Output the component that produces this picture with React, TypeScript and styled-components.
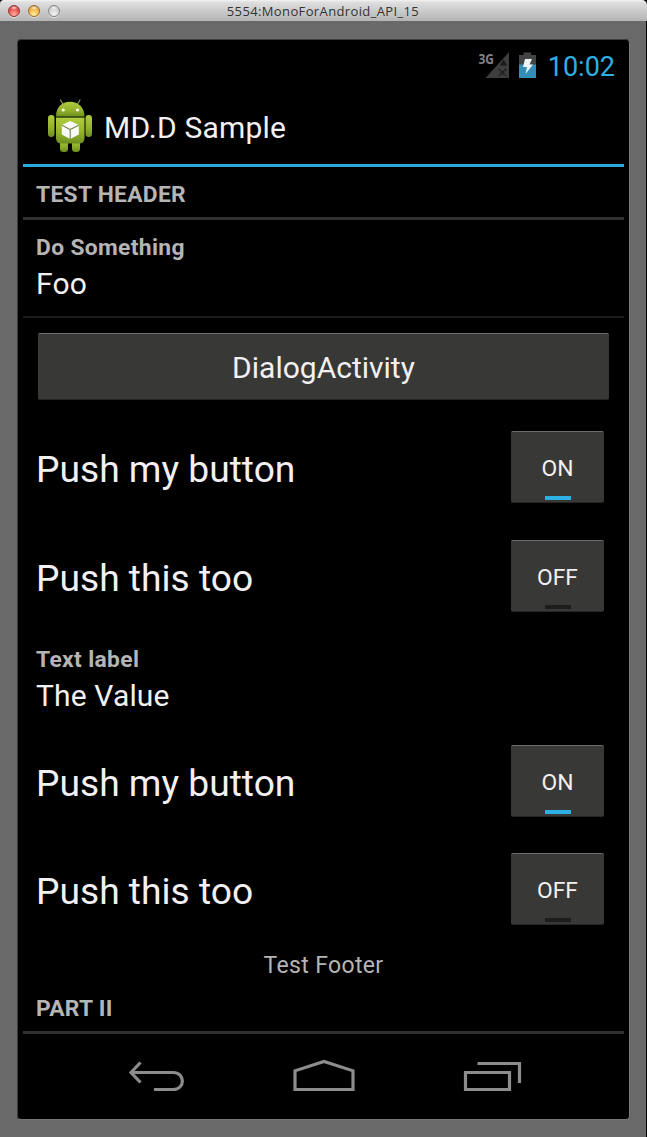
import React from "react";
import styled, { createGlobalStyle } from "styled-components";

const GlobalStyle = createGlobalStyle`
  * { box-sizing: border-box; }
  html, body { margin: 0; padding: 0; background: #000; }
  body { font-family: Roboto, "Liberation Sans", sans-serif; color: #f3f0f3; }
  button { font: inherit; color: inherit; padding: 0; margin: 0; border: 0; background: none; }
`;

const Window = styled.div`
  width: 647px;
  height: 1137px;
  display: flex;
  flex-direction: column;
  overflow: hidden;
  background: #000;
`;

const TitleBar = styled.header`
  height: 21px;
  flex: none;
  display: grid;
  grid-template-columns: 1fr auto 1fr;
  align-items: center;
  padding: 1px 9px 0 8px;
  border-radius: 4px 5px 0 0;
  background: linear-gradient(#f2f2f2, #dedede 12%, #b4b4b4);
`;

const Lights = styled.div`
  display: flex;
  gap: 8px;
`;

const Light = styled.span<{ $top: string; $mid: string; $glow: string; $edge: string }>`
  width: 12px;
  height: 12px;
  border-radius: 50%;
  border: 1px solid ${(p) => p.$edge};
  background:
    radial-gradient(ellipse 4px 2px at 50% 18%, rgba(255, 255, 255, 0.85), transparent),
    radial-gradient(circle at 50% 85%, ${(p) => p.$glow}, ${(p) => p.$mid} 60%, ${(p) => p.$top});
  box-shadow: 0 1px 0 rgba(255, 255, 255, 0.5);
`;

const WindowTitle = styled.h1`
  margin: 0;
  padding-top: 1px;
  font: 400 13px/19px "Open Sans", sans-serif;
  letter-spacing: 0.37px;
  color: #333;
  white-space: nowrap;
`;

const Bezel = styled.main`
  flex: 1;
  width: 646px;
  padding: 18px 16px 18px 17px;
  background: #696969;
`;

const Screen = styled.div`
  height: 1081px;
  display: flex;
  flex-direction: column;
  padding: 0 5px;
  border: 1px solid #3c3c3c;
  border-right-color: #777;
  border-bottom-color: #777;
  border-radius: 4px;
  background: #000;
`;

const StatusBar = styled.div`
  height: 47px;
  flex: none;
  display: flex;
  justify-content: flex-end;
  padding: 6px 9px 0 0;
`;

const Clock = styled.time`
  font-size: 27px;
  line-height: 42px;
  color: #2fb0e3;
  margin-left: 10px;
`;

const ActionBar = styled.div`
  height: 80px;
  flex: none;
  display: flex;
  align-items: center;
  padding: 4px 0 0 24px;
  border-bottom: 3px solid #2ba9dc;
`;

const RobotIcon = styled.svg`
  flex: none;
  margin-top: -3px;
`;

const AppTitle = styled.h2`
  margin: 0 0 0 11px;
  font-size: 30px;
  line-height: 36px;
  font-weight: 400;
  letter-spacing: 0.2px;
`;

const SectionHeader = styled.h3<{ $height: number }>`
  margin: 0;
  height: ${(p) => p.$height}px;
  flex: none;
  padding: 0 13px 8px;
  display: flex;
  align-items: flex-end;
  font-size: 22.8px;
  line-height: 29px;
  font-weight: 700;
  letter-spacing: 0.3px;
  color: #b5b5b5;
  border-bottom: 3px solid #303030;
`;

const Entry = styled.div<{ $height: number; $divided?: boolean }>`
  height: ${(p) => p.$height}px;
  flex: none;
  padding: 13px 13px 0;
  border-bottom: ${(p) => (p.$divided ? "2px solid #1c1c1c" : "0")};
`;

const EntryLabel = styled.div`
  font-size: 22.8px;
  line-height: 30px;
  font-weight: 700;
  letter-spacing: 0.35px;
  color: #b5b5b5;
`;

const EntryValue = styled.div`
  font-size: 30px;
  line-height: 42px;
  letter-spacing: 0.15px;
`;

const ButtonRow = styled.div`
  height: 113px;
  flex: none;
  padding: 15px 15px 0;
`;

const WideButton = styled.button`
  display: block;
  width: 571px;
  height: 67px;
  border-radius: 2px;
  border-top: 1px solid #6c6d6b;
  border-bottom: 1px solid #242524;
  background: #383936;
  font-size: 30px;
  line-height: 67px;
  text-align: center;
`;

const ToggleRow = styled.div<{ $height: number }>`
  height: ${(p) => p.$height}px;
  flex: none;
  display: flex;
  align-items: flex-start;
  justify-content: space-between;
  padding: 0 20px 0 13px;
`;

const ToggleLabel = styled.span`
  font-size: 37.2px;
  line-height: 76px;
`;

const ToggleButton = styled.button`
  width: 93px;
  height: 72px;
  display: flex;
  flex-direction: column;
  align-items: center;
  justify-content: space-between;
  padding-bottom: 2px;
  border-radius: 2px;
  border-top: 1px solid #6c6d6b;
  border-bottom: 1px solid #242524;
  background: #383936;
`;

const ToggleState = styled.span`
  padding-top: 22px;
  font-size: 22.8px;
  line-height: 29px;
`;

const Indicator = styled.span<{ $on: boolean }>`
  width: 26px;
  height: 4px;
  background: ${(p) => (p.$on ? "#2db0e4" : "#1d1e1c")};
`;

const Footer = styled.div`
  height: 40px;
  flex: none;
  padding-top: 6px;
  text-align: center;
  font-size: 23px;
  line-height: 29px;
  letter-spacing: 0.35px;
  color: #b5b5b5;
`;

const NavBar = styled.nav`
  flex: 1;
  min-height: 0;
  display: flex;
  justify-content: space-between;
  padding: 25px 101px 0 105px;
`;

const NavIcon = styled.svg`
  flex: none;
  fill: none;
  stroke: #8c8c8c;
  stroke-width: 3.2;
`;

const Robot = () => (
  <RobotIcon width="46" height="54" viewBox="0 0 46 54">
    <defs>
      <linearGradient id="green" x1="0" y1="0" x2="0" y2="1">
        <stop offset="0" stopColor="#b0cb3e" />
        <stop offset="0.55" stopColor="#94b42c" />
        <stop offset="1" stopColor="#6d8f20" />
      </linearGradient>
    </defs>
    <path d="M13.5 1l3 5M33 1l-3 5" stroke="#7d9a2c" strokeWidth="1.3" strokeLinecap="round" />
    <path d="M9 17.500C9 8 15 2.800 23 2.800S37.500 8 37.500 17.500Z" fill="url(#green)" />
    <rect x="1" y="16" width="6.500" height="22" rx="3.200" fill="url(#green)" />
    <rect x="38.500" y="16" width="6.500" height="22" rx="3.200" fill="url(#green)" />
    <rect x="13" y="38" width="8" height="15" rx="3.500" fill="url(#green)" />
    <rect x="25" y="38" width="8" height="15" rx="3.500" fill="url(#green)" />
    <path d="M9 19H37.500V39Q37.500 44.500 32 44.500H14.500Q9 44.500 9 39Z" fill="url(#green)" />
    <path d="M9 18.300H37.500" stroke="#53701a" strokeWidth="1.200" />
    <circle cx="16.200" cy="11" r="1.600" fill="#fff" />
    <circle cx="30.500" cy="11" r="1.600" fill="#fff" />
    <path d="M23.200 22L31.800 26V35.500L23.200 40L14.800 35.500V26Z" fill="#fafafa" />
    <path d="M15 26.300L23.200 30.500L31.600 26.300M23.200 30.500V40" fill="none" stroke="#7b8b50" strokeWidth="1.200" />
  </RobotIcon>
);

const StatusIcons = () => (
  <svg width="60" height="34" viewBox="0 -6 60 34">
    <text x="0.500" y="11.500" fontFamily="Open Sans" fontSize="14" fontWeight="700" textLength="15.500" lengthAdjust="spacingAndGlyphs" fill="#828282">3G</text>
    <path d="M31 0V26H7.500Z" fill="#3d3d3d" />
    <path d="M25.500 7.500l3.500 6h-7z" fill="#191919" />
    <path d="M21 17l7 7M28 17l-7 7" stroke="#181818" strokeWidth="1.600" strokeDasharray="2 1" />
    <path d="M41 3H45.500V0.500H53V3H58V13H41Z" fill="#434343" />
    <path d="M41 12.500H58V26H41Z" fill="#348fb8" />
    <path d="M47 7H54L51.500 12.500H55L47.500 22L49 15H45Z" fill="#eef3f5" />
  </svg>
);

const Toggle = ({ label, on, height }: { label: string; on: boolean; height: number }) => (
  <ToggleRow $height={height}>
    <ToggleLabel>{label}</ToggleLabel>
    <ToggleButton>
      <ToggleState>{on ? "ON" : "OFF"}</ToggleState>
      <Indicator $on={on} />
    </ToggleButton>
  </ToggleRow>
);

export default function App() {
  return (
    <Window>
      <GlobalStyle />
      <TitleBar>
        <Lights>
          <Light $top="#b3302f" $mid="#e8504c" $glow="#ffb0a4" $edge="#8f3936" />
          <Light $top="#c27f22" $mid="#f0b243" $glow="#fff0a0" $edge="#98692c" />
          <Light $top="#b4b4b4" $mid="#d2d2d2" $glow="#f4f4f4" $edge="#858585" />
        </Lights>
        <WindowTitle>5554:MonoForAndroid_API_15</WindowTitle>
      </TitleBar>
      <Bezel>
        <Screen>
          <StatusBar>
            <StatusIcons />
            <Clock>10:02</Clock>
          </StatusBar>
          <ActionBar>
            <Robot />
            <AppTitle>MD.D Sample</AppTitle>
          </ActionBar>
          <SectionHeader $height={53}>TEST HEADER</SectionHeader>
          <Entry $height={98} $divided>
            <EntryLabel>Do Something</EntryLabel>
            <EntryValue>Foo</EntryValue>
          </Entry>
          <ButtonRow>
            <WideButton>DialogActivity</WideButton>
          </ButtonRow>
          <Toggle label="Push my button" on height={109} />
          <Toggle label="Push this too" on={false} height={92} />
          <Entry $height={113}>
            <EntryLabel>Text label</EntryLabel>
            <EntryValue>The Value</EntryValue>
          </Entry>
          <Toggle label="Push my button" on height={108} />
          <Toggle label="Push this too" on={false} height={92} />
          <Footer>Test Footer</Footer>
          <SectionHeader $height={49}>PART II</SectionHeader>
          <NavBar>
            <NavIcon width="57" height="34" viewBox="0 0 57 34">
              <path d="M12.500 3.500L3 13.500L12.500 23.500M4 13.500H45C57.500 13.500 57.500 30.500 45 30.500H26" />
            </NavIcon>
            <NavIcon width="62" height="34" viewBox="0 0 62 34">
              <path d="M2 30.500V11.800L31 2.500L60 11.800V30.500Z" />
            </NavIcon>
            <NavIcon width="60" height="34" viewBox="0 0 60 34">
              <path d="M2.500 13.500H46.500V30.500H2.500ZM14.500 4.500H56.500V24" />
            </NavIcon>
          </NavBar>
        </Screen>
      </Bezel>
    </Window>
  );
}
